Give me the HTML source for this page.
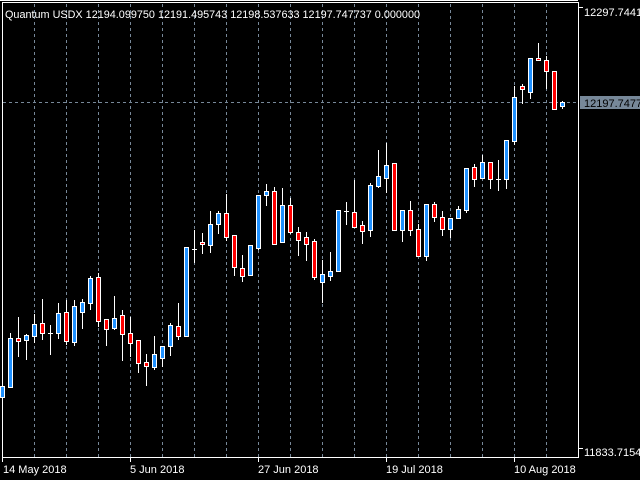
<!DOCTYPE html>
<html><head><meta charset="utf-8"><style>
html,body{margin:0;padding:0;background:#000;width:640px;height:480px;overflow:hidden}
svg{display:block}
text{font-family:"Liberation Sans",sans-serif;font-size:11px;fill:#fff}
</style></head><body>
<svg width="640" height="480" xmlns="http://www.w3.org/2000/svg" shape-rendering="crispEdges">
<rect width="640" height="480" fill="#000"/>
<g stroke="#778899" stroke-dasharray="3,3" stroke-width="1">
<path d="M34.5 4V457M66.5 4V457M98.5 4V457M130.5 4V457M162.5 4V457M194.5 4V457M226.5 4V457M258.5 4V457M290.5 4V457M322.5 4V457M354.5 4V457M386.5 4V457M418.5 4V457M450.5 4V457M482.5 4V457M514.5 4V457M546.5 4V457"/>
<path d="M3 102.5H578"/>
</g>
<g stroke="#fff" stroke-width="1" fill="none">
<path d="M0 0.5H578M2 2.5H578M2.5 2V457.5M578.5 2V458M2 457.5H578M2.5 457V462M130.5 457V462M258.5 457V462M386.5 457V462M514.5 457V462M578 7.5H583M578 448.5H583"/>
<path d="M2.5 380V398M10.5 333V387M18.5 317V357M26.5 334V360M34.5 314V343M42.5 299V340M50.5 325V355M58.5 303V339M66.5 300V345M74.5 300V346M82.5 299V329M90.5 276V310M98.5 273V327M106.5 319V346M114.5 296V330M122.5 310V361M130.5 317V357M138.5 340V373M146.5 354V386M154.5 336V370M162.5 346V367M170.5 323V356M178.5 303V340M186.5 247V336M194.5 230V263M202.5 233V254M210.5 211V253M218.5 211V234M226.5 194V241M234.5 235V276M242.5 255V282M250.5 245V276M258.5 195V250M266.5 184V206M274.5 187V244M282.5 188V242M290.5 198V234M298.5 227V256M306.5 232V261M314.5 239V280M322.5 260V303M330.5 252V281M338.5 210V271M346.5 202V225M354.5 180V227M362.5 221V244M370.5 183V237M378.5 150V188M386.5 143V193M394.5 163V230M402.5 210V242M410.5 201V236M418.5 224V256M426.5 204V261M434.5 202V222M442.5 211V236M450.5 218V238M458.5 206V218M466.5 168V213M474.5 164V187M482.5 155V178M490.5 162V189M498.5 160V191M506.5 140V189M514.5 86V145M522.5 84V104M530.5 58V99M538.5 43V60M546.5 56V89M554.5 71V109M562.5 101V109"/>
<path d="M48 333.5H53M192 249.5H197M344 211.5H349M496 179.5H501"/>
</g>
<g stroke="#fff" stroke-width="1" fill="#1e90ff">
<rect x="0.5" y="386.5" width="4" height="11"/>
<rect x="8.5" y="338.5" width="4" height="49"/>
<rect x="24.5" y="335.5" width="4" height="5"/>
<rect x="32.5" y="324.5" width="4" height="12"/>
<rect x="56.5" y="313.5" width="4" height="20"/>
<rect x="72.5" y="306.5" width="4" height="36"/>
<rect x="80.5" y="302.5" width="4" height="10"/>
<rect x="88.5" y="278.5" width="4" height="25"/>
<rect x="112.5" y="318.5" width="4" height="10"/>
<rect x="152.5" y="354.5" width="4" height="13"/>
<rect x="160.5" y="346.5" width="4" height="12"/>
<rect x="168.5" y="325.5" width="4" height="21"/>
<rect x="184.5" y="247.5" width="4" height="89"/>
<rect x="208.5" y="224.5" width="4" height="21"/>
<rect x="216.5" y="213.5" width="4" height="11"/>
<rect x="248.5" y="245.5" width="4" height="30"/>
<rect x="256.5" y="195.5" width="4" height="53"/>
<rect x="264.5" y="191.5" width="4" height="4"/>
<rect x="280.5" y="205.5" width="4" height="37"/>
<rect x="320.5" y="274.5" width="4" height="8"/>
<rect x="328.5" y="271.5" width="4" height="5"/>
<rect x="336.5" y="210.5" width="4" height="61"/>
<rect x="368.5" y="185.5" width="4" height="45"/>
<rect x="376.5" y="176.5" width="4" height="10"/>
<rect x="384.5" y="165.5" width="4" height="13"/>
<rect x="400.5" y="210.5" width="4" height="20"/>
<rect x="424.5" y="204.5" width="4" height="52"/>
<rect x="448.5" y="218.5" width="4" height="11"/>
<rect x="456.5" y="209.5" width="4" height="9"/>
<rect x="464.5" y="168.5" width="4" height="42"/>
<rect x="480.5" y="162.5" width="4" height="16"/>
<rect x="504.5" y="140.5" width="4" height="39"/>
<rect x="512.5" y="97.5" width="4" height="44"/>
<rect x="528.5" y="58.5" width="4" height="34"/>
<rect x="560.5" y="102.5" width="4" height="4"/>
</g>
<g stroke="#fff" stroke-width="1" fill="#ff0000">
<rect x="16.5" y="338.5" width="4" height="3"/>
<rect x="40.5" y="323.5" width="4" height="10"/>
<rect x="64.5" y="312.5" width="4" height="29"/>
<rect x="96.5" y="277.5" width="4" height="44"/>
<rect x="104.5" y="319.5" width="4" height="10"/>
<rect x="120.5" y="315.5" width="4" height="19"/>
<rect x="128.5" y="333.5" width="4" height="10"/>
<rect x="136.5" y="340.5" width="4" height="23"/>
<rect x="144.5" y="362.5" width="4" height="4"/>
<rect x="176.5" y="326.5" width="4" height="10"/>
<rect x="200.5" y="242.5" width="4" height="2"/>
<rect x="224.5" y="213.5" width="4" height="24"/>
<rect x="232.5" y="235.5" width="4" height="32"/>
<rect x="240.5" y="268.5" width="4" height="8"/>
<rect x="272.5" y="191.5" width="4" height="53"/>
<rect x="288.5" y="205.5" width="4" height="27"/>
<rect x="296.5" y="232.5" width="4" height="8"/>
<rect x="304.5" y="237.5" width="4" height="7"/>
<rect x="312.5" y="241.5" width="4" height="36"/>
<rect x="352.5" y="212.5" width="4" height="15"/>
<rect x="360.5" y="225.5" width="4" height="6"/>
<rect x="392.5" y="163.5" width="4" height="67"/>
<rect x="408.5" y="210.5" width="4" height="20"/>
<rect x="416.5" y="229.5" width="4" height="27"/>
<rect x="432.5" y="204.5" width="4" height="13"/>
<rect x="440.5" y="217.5" width="4" height="12"/>
<rect x="472.5" y="167.5" width="4" height="12"/>
<rect x="488.5" y="162.5" width="4" height="17"/>
<rect x="520.5" y="86.5" width="4" height="3"/>
<rect x="536.5" y="58.5" width="4" height="2"/>
<rect x="544.5" y="60.5" width="4" height="11"/>
<rect x="552.5" y="71.5" width="4" height="38"/>
</g>
<text x="5" y="18" textLength="415" lengthAdjust="spacingAndGlyphs">Quantum USDX 12194.099750 12191.495743 12198.537633 12197.747737 0.000000</text>
<text x="584" y="16">12297.7441</text>
<rect x="580" y="96" width="60" height="13" fill="#778899"/>
<text x="584" y="107" style="fill:#000">12197.7477</text>
<text x="584" y="456">11833.7154</text>
<text x="3" y="473">14 May 2018</text>
<text x="130" y="473">5 Jun 2018</text>
<text x="258" y="473">27 Jun 2018</text>
<text x="386" y="473">19 Jul 2018</text>
<text x="514" y="473">10 Aug 2018</text>
</svg>
</body></html>
